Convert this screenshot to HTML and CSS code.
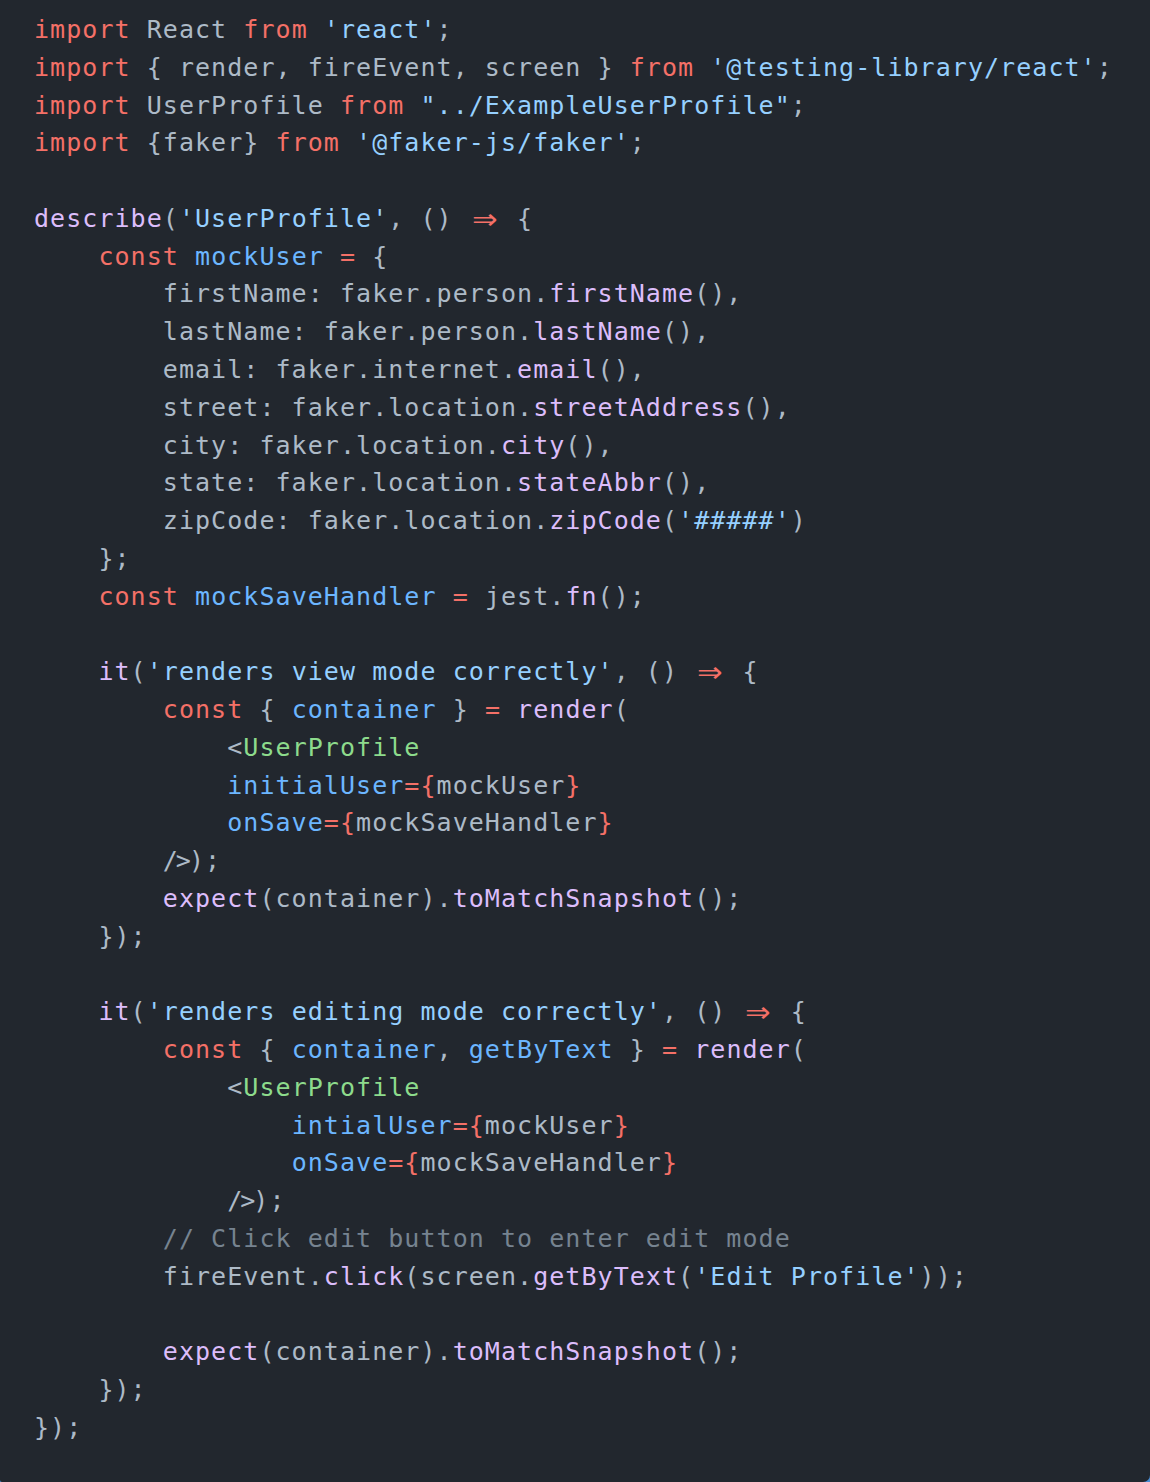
FILE: index.html
```html
<!DOCTYPE html>
<html lang="en">
<head>
<meta charset="utf-8">
<title>UserProfile test</title>
<link rel="stylesheet" href="styles.css">
</head>
<body>
<pre class="code"><span class="k">import</span> React <span class="k">from</span> <span class="s">'react'</span>;
<span class="k">import</span> { render, fireEvent, screen } <span class="k">from</span> <span class="s">'@testing-library/react'</span>;
<span class="k">import</span> UserProfile <span class="k">from</span> <span class="s">"../ExampleUserProfile"</span>;
<span class="k">import</span> {faker} <span class="k">from</span> <span class="s">'@faker-js/faker'</span>;

<span class="f">describe</span>(<span class="s">'UserProfile'</span>, () <span class="k arrow">⇒</span> {
    <span class="k">const</span> <span class="v">mockUser</span> <span class="k">=</span> {
        firstName: faker.person.<span class="f">firstName</span>(),
        lastName: faker.person.<span class="f">lastName</span>(),
        email: faker.internet.<span class="f">email</span>(),
        street: faker.location.<span class="f">streetAddress</span>(),
        city: faker.location.<span class="f">city</span>(),
        state: faker.location.<span class="f">stateAbbr</span>(),
        zipCode: faker.location.<span class="f">zipCode</span>(<span class="s">'#####'</span>)
    };
    <span class="k">const</span> <span class="v">mockSaveHandler</span> <span class="k">=</span> jest.<span class="f">fn</span>();

    <span class="f">it</span>(<span class="s">'renders view mode correctly'</span>, () <span class="k arrow">⇒</span> {
        <span class="k">const</span> { <span class="v">container</span> } <span class="k">=</span> <span class="f">render</span>(
            &lt;<span class="g">UserProfile</span>
            <span class="v">initialUser</span><span class="k">={</span>mockUser<span class="k">}</span>
            <span class="v">onSave</span><span class="k">={</span>mockSaveHandler<span class="k">}</span>
        <span class="lig">/&gt;</span>);
        <span class="f">expect</span>(container).<span class="f">toMatchSnapshot</span>();
    });

    <span class="f">it</span>(<span class="s">'renders editing mode correctly'</span>, () <span class="k arrow">⇒</span> {
        <span class="k">const</span> { <span class="v">container</span>, <span class="v">getByText</span> } <span class="k">=</span> <span class="f">render</span>(
            &lt;<span class="g">UserProfile</span>
                <span class="v">intialUser</span><span class="k">={</span>mockUser<span class="k">}</span>
                <span class="v">onSave</span><span class="k">={</span>mockSaveHandler<span class="k">}</span>
            <span class="lig">/&gt;</span>);
        <span class="c">// Click edit button to enter edit mode</span>
        fireEvent.<span class="f">click</span>(screen.<span class="f">getByText</span>(<span class="s">'Edit Profile'</span>));

        <span class="f">expect</span>(container).<span class="f">toMatchSnapshot</span>();
    });
});</pre>
</body>
</html>
```

FILE: styles.css
```css
html, body {
  margin: 0;
  padding: 0;
  background: #4a8ed6;
}

.code {
  margin: 0;
  box-sizing: border-box;
  min-height: 1482px;
  padding: 11px 0 0 34px;
  background: #22272e;
  border-bottom-right-radius: 7px;
  border-bottom-left-radius: 2px;
  color: #adbac7;
  font-family: "DejaVu Sans Mono", "Liberation Mono", monospace;
  font-size: 25px;
  letter-spacing: 1.05px;
  line-height: 37.78px;
  white-space: pre;
}

.k { color: #f47067; }
.s { color: #96d0ff; }
.f { color: #dcbdfb; }
.v { color: #6cb6ff; }
.g { color: #8ddb8c; }
.c { color: #768390; }

.arrow {
  display: inline-block;
  width: 32.2px;
  text-align: center;
  letter-spacing: 0;
  font-size: 36px;
  line-height: 20px;
  transform: scaleX(1.15) translateY(3px);
}

.lig {
  letter-spacing: -2px;
}
```
